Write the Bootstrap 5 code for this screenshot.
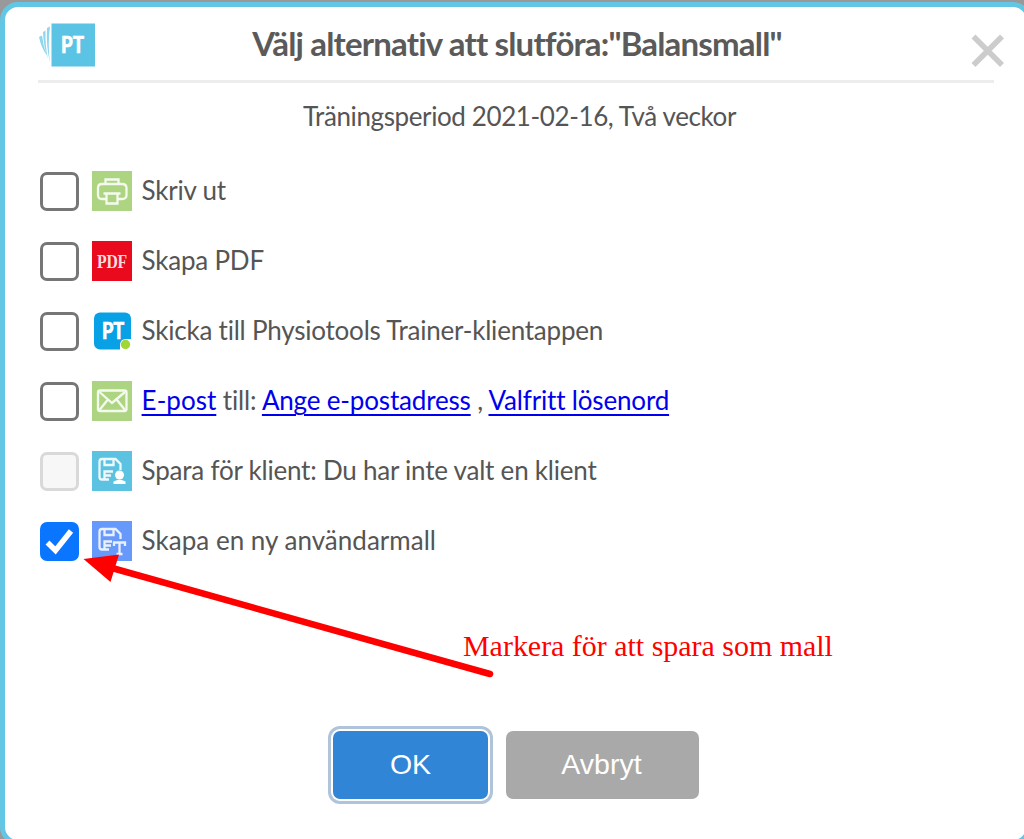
<!DOCTYPE html>
<html lang="sv">
<head>
<meta charset="utf-8">
<meta name="viewport" content="width=device-width, initial-scale=1">
<title>Välj alternativ att slutföra</title>
<link href="https://cdn.jsdelivr.net/npm/bootstrap@5.3.0/dist/css/bootstrap.min.css" rel="stylesheet">
<style>
  body { background: #999; font-family: "Lato", "Open Sans", sans-serif; font-size: 26px; line-height: 40px; color: #555; overflow: hidden; }
  .page { height: 839px; padding-top: 2px; overflow: hidden; }
  .dialog { width: 1031px; height: 843px; border: 5px solid #63c6e5; border-radius: 18px; background: #fff; padding: 0 0 0 33px; }
  .dialog-top { width: 956px; height: 76px; border-bottom: 3px solid #ededed; }
  .logo { left: 0; top: 15px; }
  .title { font-size: 33px; font-weight: 700; line-height: 40px; padding-top: 16px; padding-left: 2px; margin: 0; color: #5a5a5a; letter-spacing: -.82px; }
  .close-x { right: -11px; top: 27px; width: 34px; height: 34px; padding: 0; border: 0; background: none; line-height: 0; }
  .period { width: 963px; padding-top: 13px; height: 88px; letter-spacing: -.39px; }
  .option { height: 40px; margin-bottom: 30px; letter-spacing: -.22px; padding-left: .6px; }
  .tick { appearance: none; width: 39px; height: 39px; border: 3px solid #767676; border-radius: 7px; background: #fff; margin: 1px 13px 0 1px; flex: none; }
  .tick:disabled { border-color: #d9d9d9; background: #f7f7f7; }
  .tick:checked { border: 0; background: #0a75ff url("data:image/svg+xml,%3Csvg xmlns='http://www.w3.org/2000/svg' viewBox='0 0 39 39'%3E%3Cpath d='M7.5 20.500L15.500 28.500L31 9' fill='none' stroke='white' stroke-width='5.500'/%3E%3C/svg%3E"); }
  .pic { width: 40px; height: 40px; flex: none; margin-right: 10px; }
  .option a { color: #00e; text-decoration-thickness: 2px; text-underline-offset: 4px; }
  .option p.links { letter-spacing: -.17px; }
  .option .wide { letter-spacing: .02px; }
  .option p { margin: -1px 0 0; white-space: nowrap; }
  .actions { left: 333px; top: 731px; gap: 18px; }
  .push { height: 68px; border: 0; border-radius: 7px; color: #fff; font: 28.500px "Liberation Sans", sans-serif; padding: 0 0 2px; }
  .ok { width: 155px; background: #3185d6; box-shadow: 0 0 0 2px #fff, 0 0 0 5px #afc3da; }
  .cancel { width: 193px; background: #a9a9a9; padding-right: 2px; }
  .note { left: 463px; top: 626px; color: #f00; font: 29.950px/40px "Liberation Serif", serif; white-space: nowrap; }
  .arrow { left: 0; top: 0; pointer-events: none; }
</style>
</head>
<body>
<main class="page position-relative">
  <section class="dialog">
    <header class="dialog-top position-relative text-center">
      <svg class="logo position-absolute" width="58" height="46"><rect x="13.500" y="1.500" width="43.500" height="43" fill="#5bc4e5"/><g fill="#8dd6ed"><path d="M1 15L4 13.500Q5 23 8.500 33Q3 25 1 15ZM5 10L7.500 8.500Q7 24 10 37Q5.500 25 5 10ZM9 6L12 4.500Q9.500 22 12 41Q8 24 9 6Z"/></g><text x="23" y="31" font-size="23" font-weight="900" fill="#fff" stroke="#fff" stroke-width=".6" textLength="23" lengthAdjust="spacingAndGlyphs">PT</text></svg>
      <h1 class="title">Välj alternativ att slutföra:"Balansmall"</h1>
      <button class="close-x position-absolute" aria-label="Stäng"><svg width="34" height="34"><path d="M2.500 2.500L31 31M31 2.500L2.500 31" stroke="#ccc" stroke-width="5.500"/></svg></button>
    </header>
    <div class="period text-center">Träningsperiod 2021-02-16, Två veckor</div>
    <div class="option d-flex"><input type="checkbox" class="tick">
      <svg class="pic"><rect width="40" height="40" fill="#add581"/><g fill="none" stroke="#f5faef" stroke-width="2.300"><path d="M13.500 12V8.500H26.500V12M13.500 28H10Q6 28 6 24V17Q6 13 10 13H30Q34.500 13 34.500 17V24Q34.500 28 30 28H26.500M11.500 22.500H28.500M14.500 22.500V32.500H25.500V22.500"/></g></svg><p>Skriv ut</p></div>
    <div class="option d-flex"><input type="checkbox" class="tick">
      <svg class="pic"><rect width="40" height="40" fill="#ea0a1e"/><text x="5" y="27" font-size="19" font-weight="700" font-family="Liberation Serif, serif" fill="#fbdcdf" textLength="30" lengthAdjust="spacingAndGlyphs">PDF</text></svg><p>Skapa PDF</p></div>
    <div class="option d-flex"><input type="checkbox" class="tick">
      <svg class="pic"><rect x="2" y="1.500" width="37" height="37" rx="6" fill="#09a1e6"/><text x="10" y="27.500" font-size="23" font-weight="900" fill="#fff" stroke="#fff" stroke-width=".6" textLength="22" lengthAdjust="spacingAndGlyphs">PT</text><path d="M28 40V34Q28 28 34 28H40V40Z" fill="#fff"/><circle cx="33.500" cy="33.500" r="4.700" fill="#a2d637"/></svg><p>Skicka till Physiotools Trainer-klientappen</p></div>
    <div class="option d-flex"><input type="checkbox" class="tick">
      <svg class="pic"><rect width="40" height="40" fill="#add581"/><g fill="none" stroke="#f5faef" stroke-width="2.300"><rect x="6" y="9.500" width="28.500" height="20.500" rx="2"/><path d="M7.500 11L20 22L33 11M7.500 29L15.500 19M33 29L25 19"/></g></svg><p class="links"><a href="#" class="wide">E-post</a> till: <a href="#">Ange e-postadress</a> , <a href="#">Valfritt lösenord</a></p></div>
    <div class="option d-flex"><input type="checkbox" class="tick" disabled>
      <svg class="pic"><rect width="40" height="40" fill="#5bc2e1"/><g fill="none" stroke="#eef9fc" stroke-width="2.300"><path d="M17 28.500H10Q7.500 28.500 7.500 26V11Q7.500 8 10 8H23.500L28.500 13V19M12.500 8V14H21.500V8M12.500 28V20.500H21M12.500 24.500H19"/></g><circle cx="27.500" cy="24" r="4.500" fill="#fff"/><path d="M21.500 33V30.500Q27.500 27 33.500 30.500V33Z" fill="#fff"/></svg><p>Spara för klient: Du har inte valt en klient</p></div>
    <div class="option d-flex"><input type="checkbox" class="tick" checked>
      <svg class="pic"><rect width="40" height="40" fill="#6799fb"/><g fill="none" stroke="#e9f0ff" stroke-width="2.300"><path d="M17 28.500H10Q7.500 28.500 7.500 26V11Q7.500 8 10 8H23.500L28.500 13V18M12.500 8V14H21.500V8M12.500 28V20.500H20M12.500 24.500H19M22 25V21.500H33V25M27.500 21.500V33M24.500 33H30.500"/></g></svg><p class="wide">Skapa en ny användarmall</p></div>
  </section>
  <svg class="arrow position-absolute" width="1024" height="839"><path d="M112 568L490 674" stroke="#f00" stroke-width="6.500" stroke-linecap="round"/><path d="M83.500 559L119 554.500L110.500 582Z" fill="#f00"/></svg>
  <div class="note position-absolute">Markera för att spara som mall</div>
  <div class="actions position-absolute d-flex"><button class="push ok">OK</button><button class="push cancel">Avbryt</button></div>
</main>
<script src="https://cdn.jsdelivr.net/npm/bootstrap@5.3.0/dist/js/bootstrap.bundle.min.js"></script>
</body>
</html>
